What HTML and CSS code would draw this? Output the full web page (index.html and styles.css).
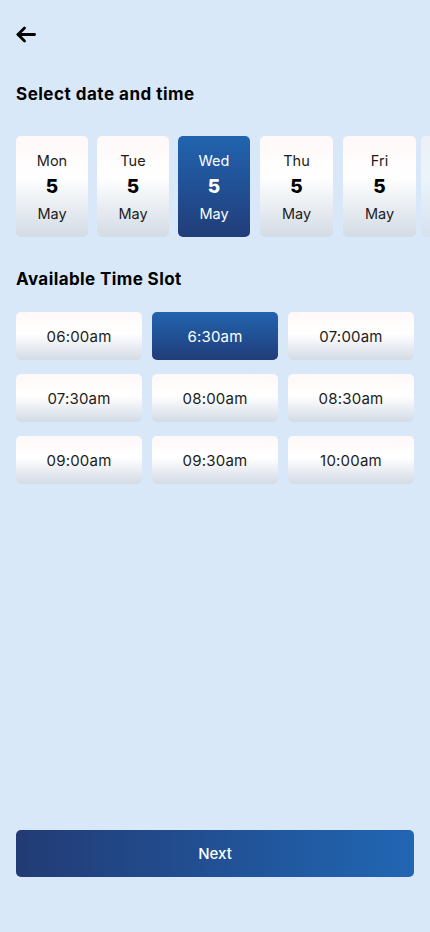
FILE: index.html
```html
<!DOCTYPE html>
<html lang="en">
<head>
    <meta charset="UTF-8">
    <meta name="viewport" content="width=device-width, initial-scale=1.0">
    <title>Select date and time</title>
    <link rel="stylesheet" href="styles.css">
</head>
<body>

<div class="screen">
    <!-- Top bar -->
    <div class="topbar">
        <button class="back" aria-label="Back">
            <svg width="20" height="17" viewBox="0 0 20 17" fill="none" stroke="#000" stroke-width="2.8" stroke-linecap="round" stroke-linejoin="round">
                <path d="M18.5 8.5H2"/>
                <path d="M8.5 2L2 8.5L8.5 15"/>
            </svg>
        </button>
    </div>

    <h2 class="title">Select date and time</h2>

    <!-- Date strip -->
    <div class="dates">
        <div class="date"><span class="day">Mon</span><span class="num">5</span><span class="month">May</span></div>
        <div class="date"><span class="day">Tue</span><span class="num">5</span><span class="month">May</span></div>
        <div class="date active"><span class="day">Wed</span><span class="num">5</span><span class="month">May</span></div>
        <div class="date"><span class="day">Thu</span><span class="num">5</span><span class="month">May</span></div>
        <div class="date"><span class="day">Fri</span><span class="num">5</span><span class="month">May</span></div>
        <div class="date faded"></div>
    </div>

    <h2 class="title slots-title">Available Time Slot</h2>

    <!-- Time slots -->
    <div class="slots">
        <div class="slot">06:00am</div>
        <div class="slot active">6:30am</div>
        <div class="slot">07:00am</div>
        <div class="slot">07:30am</div>
        <div class="slot">08:00am</div>
        <div class="slot">08:30am</div>
        <div class="slot">09:00am</div>
        <div class="slot">09:30am</div>
        <div class="slot">10:00am</div>
    </div>

    <div class="footer">
        <button class="next">Next</button>
    </div>
</div>

</body>
</html>
```

FILE: styles.css
```css
/* Page */
body {
    margin: 0;
    background-color: #d9e8f8;
    font-family: Inter, "Noto Sans", sans-serif;
    color: #111;
    overflow: hidden;
}

.screen {
    height: 932px;
    box-sizing: border-box;
    padding: 0 16px;
    display: flex;
    flex-direction: column;
}

/* Back arrow */
.topbar {
    padding-top: 26px;
    height: 18px;
}

.back {
    border: 0;
    background: none;
    padding: 0;
    display: block;
    cursor: pointer;
}

.title {
    margin: 0;
    margin-top: 38px;
    font-size: 17px;
    font-weight: 700;
    line-height: 24px;
    color: #000;
    letter-spacing: 0.5px;
}

.slots-title {
    margin-top: 30px;
    letter-spacing: 0.4px;
}

/* Date cards */
.dates {
    display: flex;
    gap: 9px;
    margin-top: 30px;
    margin-right: -16px;
    overflow: hidden;
}

.date {
    flex: 0 0 72px;
    height: 101px;
    border-radius: 5px;
    background: linear-gradient(180deg, #fff8f8 0%, #ffffff 40%, #d3dbe5 100%);
    display: flex;
    flex-direction: column;
    align-items: center;
    justify-content: center;
    gap: 5px;
}

.date:nth-child(4),
.date:nth-child(5) {
    margin-left: 1px;
    flex-basis: 73px;
}

.date .day,
.date .month {
    font-size: 14.5px;
    line-height: 21px;
    color: #1c1c1c;
}

.date .num {
    font-size: 19px;
    font-weight: 800;
    line-height: 22px;
    color: #000;
}

.date.active {
    background: linear-gradient(180deg, #2164af 0%, #213d7a 100%);
}

.date.active .day,
.date.active .month,
.date.active .num {
    color: #fff;
}

.date.faded {
    opacity: 0.5;
    margin-left: -4px;
}

/* Time slots */
.slots {
    display: grid;
    grid-template-columns: repeat(3, 1fr);
    column-gap: 10px;
    row-gap: 14px;
    margin-top: 21px;
}

.slot {
    height: 48px;
    border-radius: 5px;
    background: linear-gradient(180deg, #fff8f8 0%, #ffffff 45%, #d3dbe5 100%);
    display: flex;
    align-items: center;
    justify-content: center;
    font-size: 15px;
    letter-spacing: 0.2px;
    color: #1c1c1c;
}

.slot.active {
    background: linear-gradient(180deg, #2164af 0%, #213d7a 100%);
    color: #fff;
}

/* Next button */
.footer {
    margin-top: auto;
    padding-bottom: 55px;
}

.next {
    width: 100%;
    height: 47px;
    border: 0;
    border-radius: 5px;
    background: linear-gradient(90deg, #223b75 0%, #2166b3 100%);
    color: #fff;
    font-family: Inter, "Noto Sans", sans-serif;
    font-size: 15px;
    font-weight: 500;
    cursor: pointer;
}
```
